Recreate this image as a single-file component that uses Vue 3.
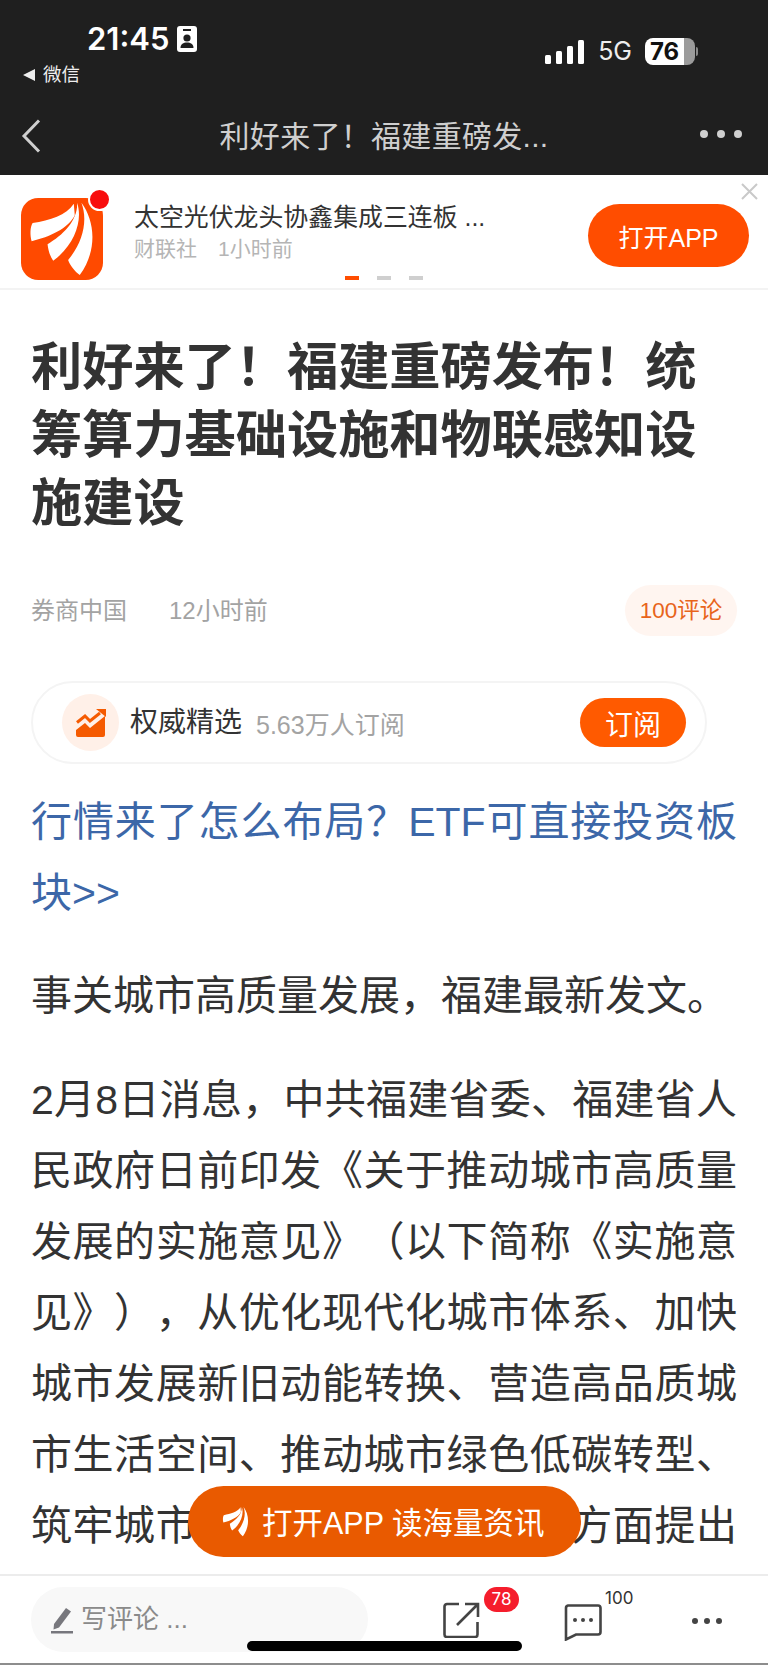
<script setup>
const feathers = [
  'M222 100C200 135 150 150 98 158C90 170 90 195 95 213C150 200 205 175 225 135Z',
  'M232 97C250 150 225 225 160 272C150 258 145 240 143 222C190 195 235 150 232 97Z',
  'M245 97C285 150 295 240 240 315C225 305 210 285 205 270C250 215 265 150 245 97Z'
]
const paragraphs = [
  '事关城市高质量发展，福建最新发文。',
  '2月8日消息，中共福建省委、福建省人民政府日前印发《关于推动城市高质量发展的实施意见》（以下简称《实施意见》），从优化现代化城市体系、加快城市发展新旧动能转换、营造高品质城市生活空间、推动城市绿色低碳转型、筑牢城市安全韧性防线等六个方面提出'
]
</script>

<template>
  <div class="page">
    <header class="head">
      <div class="status">
        <div class="status-left">
          <div class="time-row">
            <span class="time">21:45</span>
            <svg class="id-badge" viewBox="0 0 20 26" width="20" height="26">
              <rect width="20" height="26" rx="3" fill="#fff" />
              <rect x="6" y="3" width="8" height="2" fill="#1f1f1f" />
              <circle cx="10" cy="12" r="3.6" fill="#1f1f1f" />
              <path d="M3.5 22c0-4 3-5.5 6.500-5.500s6.500 1.500 6.500 5.500z" fill="#1f1f1f" />
            </svg>
          </div>
          <div class="wx-row"><i class="tri"></i><span>微信</span></div>
        </div>
        <div class="status-right">
          <svg width="40" height="24" viewBox="0 0 40 24" fill="#fff">
            <rect x="0" y="15" width="6" height="9" rx="1.500" />
            <rect x="11" y="11" width="6" height="13" rx="1.500" />
            <rect x="22" y="6" width="6" height="18" rx="1.500" />
            <rect x="33" y="0" width="6" height="24" rx="1.500" />
          </svg>
          <span class="net">5G</span>
          <div class="battery"><div class="batt-body"><span>76</span></div><i class="nib"></i></div>
        </div>
      </div>
      <nav class="nav">
        <svg class="back" width="20" height="34" viewBox="0 0 20 34" fill="none" stroke="#cfcfcf" stroke-width="3">
          <path d="M18 1.500L3 17l15 15.500" />
        </svg>
        <div class="nav-title">利好来了！福建重磅发...</div>
        <div class="nav-dots"><i></i><i></i><i></i></div>
      </nav>
    </header>

    <section class="banner">
      <div class="logo">
        <svg viewBox="63 83 247 247" width="82" height="82">
          <rect x="63" y="83" width="247" height="247" rx="52" fill="#ff4a00" />
          <path v-for="d in feathers" :key="d" :d="d" fill="#fff" />
        </svg>
        <i class="logo-dot"></i>
      </div>
      <div class="banner-text">
        <div class="banner-title">太空光伏龙头协鑫集成三连板 ...</div>
        <div class="banner-sub"><span>财联社</span><span>1小时前</span></div>
      </div>
      <button class="open-btn">打开APP</button>
      <svg class="close" width="17" height="17" viewBox="0 0 17 17" stroke="#c9c9c9" stroke-width="2">
        <path d="M1 1l15 15M16 1L1 16" />
      </svg>
      <div class="pager"><i class="on"></i><i></i><i></i></div>
    </section>

    <main class="content">
      <h1 class="title">利好来了！福建重磅发布！统筹算力基础设施和物联感知设施建设</h1>
      <div class="meta">
        <div class="meta-left"><span>券商中国</span><span>12小时前</span></div>
        <div class="comment-pill">100评论</div>
      </div>
      <div class="sub-card">
        <div class="avatar">
          <svg width="30" height="28" viewBox="0 0 30 28" fill="#f55a00">
            <path d="M0 21l9-7 5 5 15-12v19a2 2 0 0 1-2 2H2a2 2 0 0 1-2-2z" />
            <path d="M1 13.500l8-6.500 5 5L24 4" fill="none" stroke="#f55a00" stroke-width="3" />
            <path d="M20 0h10v8z" />
          </svg>
        </div>
        <span class="sub-name">权威精选</span>
        <span class="sub-count">5.63万人订阅</span>
        <button class="sub-btn">订阅</button>
      </div>
      <a class="promo">行情来了怎么布局？ETF可直接投资板块&gt;&gt;</a>
      <p v-for="p in paragraphs" :key="p" class="para">{{ p }}</p>
    </main>

    <div class="float-pill">
      <svg viewBox="85 90 215 230" width="29" height="31">
        <path v-for="d in feathers" :key="d" :d="d" fill="#fff" />
      </svg>
      <span>打开APP 读海量资讯</span>
    </div>

    <footer class="toolbar">
      <div class="input">
        <svg width="22" height="28" viewBox="0 0 22 28">
          <path d="M3 18L15 2l5 3.500L8 21.500 2.500 23.500z" fill="#77777d" />
          <rect x="0" y="25" width="22" height="2.500" fill="#77777d" />
        </svg>
        <span class="input-text">写评论 ...</span>
      </div>
      <div class="tool share">
        <svg width="37" height="36" viewBox="0 0 37 36" fill="none" stroke="#444" stroke-width="2.600">
          <path d="M16 2H4a2.500 2.500 0 0 0-2.500 2.500v28A2.500 2.500 0 0 0 4 35h28a2.500 2.500 0 0 0 2.500-2.500V20" />
          <path d="M14 23L34 3M22 2h13v13" />
        </svg>
        <span class="badge">78</span>
      </div>
      <div class="tool chat">
        <svg width="38" height="37" viewBox="0 0 38 37">
          <path d="M4 1.500h30A2.500 2.500 0 0 1 36.500 4v24a2.500 2.500 0 0 1-2.500 2.500H12L2 35.500V4A2.500 2.500 0 0 1 4 1.500z" fill="none" stroke="#444" stroke-width="2.600" />
          <circle cx="11" cy="16" r="2" fill="#444" /><circle cx="19" cy="16" r="2" fill="#444" /><circle cx="27" cy="16" r="2" fill="#444" />
        </svg>
        <span class="chat-count">100</span>
      </div>
      <div class="more"><i></i><i></i><i></i></div>
      <i class="home-bar"></i>
    </footer>
  </div>
</template>

<style>
html, body { margin: 0; background: #fff; }
</style>

<style scoped>
.page {
  position: relative;
  width: 768px;
  height: 1665px;
  overflow: hidden;
  display: flex;
  flex-direction: column;
  background: #fff;
  font-family: "Liberation Sans", "Noto Sans CJK SC", sans-serif;
  text-spacing-trim: space-all;
}
i { display: block; }
button { border: 0; padding: 0; font-family: inherit; color: #fff; }

.head { height: 175px; flex: none; background: #1f1f1f; display: flex; flex-direction: column; }
.status { height: 100px; display: flex; justify-content: space-between; }
.status-left { padding: 22px 0 0 23px; }
.time-row { display: flex; align-items: center; gap: 8px; padding-left: 64px; height: 34px; }
.time { font: 600 31px/34px "Inter", sans-serif; color: #fff; }
.id-badge { margin-top: -1px; }
.wx-row { display: flex; align-items: center; gap: 8px; margin-top: 6px; color: #eee; font-size: 18.500px; line-height: 26px; }
.tri { width: 0; height: 0; border: 6px solid transparent; border-left: 0; border-right: 12px solid #eee; }
.status-right { display: flex; align-items: center; height: 27px; margin: 38px 70px 0 0; }
.net { margin-left: 13px; font: 400 25px/27px "Inter", sans-serif; color: #eee; }
.battery { display: flex; align-items: center; margin-left: 13px; }
.batt-body { width: 50px; height: 27px; border-radius: 8px; overflow: hidden; background: linear-gradient(90deg, #fff 0 39px, #9b9b9b 39px); color: #111; }
.batt-body span { display: block; width: 39px; text-align: center; font: 700 24px/27px "Inter", sans-serif; }
.nib { width: 2px; height: 9px; margin-left: 1px; background: #8a8a8a; border-radius: 0 2px 2px 0; }

.nav { height: 75px; display: flex; align-items: center; padding: 0 26px 0 21px; }
.back { margin-top: -3px; }
.nav-title { flex: 1; text-align: center; color: #cfcfcf; font-size: 30px; line-height: 40px; letter-spacing: 0.3px; margin-top: -2px; padding-left: 27px; }
.nav-dots { display: flex; gap: 9px; margin-top: -8px; }
.nav-dots i { width: 8px; height: 8px; border-radius: 50%; background: #cfcfcf; }

.banner {
  position: relative;
  flex: none;
  height: 115px;
  box-sizing: border-box;
  border-bottom: 2px solid #f3f3f3;
  display: flex;
  align-items: center;
  padding: 0 19px 0 21px;
}
.logo { position: relative; width: 82px; height: 82px; flex: none; margin-top: 14px; }
.logo svg { display: block; }
.logo-dot { position: absolute; right: -8px; top: -10px; width: 19px; height: 19px; background: #f80d0d; border: 2px solid #fff; border-radius: 50%; }
.banner-text { flex: 1; margin-left: 31px; margin-top: 0; }
.banner-title { color: #333; font-size: 24.900px; line-height: 34px; white-space: nowrap; }
.banner-sub { color: #b5b5b5; font-size: 21px; line-height: 28px; margin-top: 1px; display: flex; gap: 21px; }
.open-btn { width: 161px; height: 63px; flex: none; margin-top: 8px; border-radius: 32px; background: #ff4d00; font-size: 25px; }
.close { position: absolute; right: 10px; top: 8px; }
.pager { position: absolute; left: 345px; top: 101px; display: flex; gap: 18px; }
.pager i { width: 14px; height: 4px; background: #cfcfcf; }
.pager i.on { background: #ff4d00; }

.content { flex: 1; min-height: 0; overflow: hidden; padding: 0 31px; }
.title { margin: 44px 0 0; font-size: 51.200px; line-height: 68px; font-weight: 700; color: #333; }
.meta { margin-top: 47px; height: 51px; display: flex; align-items: center; justify-content: space-between; }
.meta-left { display: flex; gap: 42px; color: #a3a3a3; font-size: 24px; line-height: 34px; }
.comment-pill { width: 112px; height: 51px; border-radius: 26px; background: #fff5f0; color: #e8641b; font-size: 22.500px; line-height: 51px; text-align: center; }
.sub-card {
  margin-top: 45px;
  width: 676px;
  height: 83px;
  box-sizing: border-box;
  border: 2px solid #f4f4f4;
  border-radius: 42px;
  display: flex;
  align-items: center;
  padding: 0 19px 0 29px;
}
.avatar { width: 57px; height: 57px; border-radius: 50%; background: #fff0e8; display: flex; align-items: center; justify-content: center; flex: none; }
.sub-name { margin-left: 11px; font-size: 28px; color: #333; line-height: 40px; }
.sub-count { margin-left: 14px; margin-top: 4px; font-size: 25px; color: #a3a3a3; line-height: 34px; flex: 1; }
.sub-btn { width: 106px; height: 49px; border-radius: 25px; background: #ff5a00; font-size: 28px; }
.promo { display: block; margin-top: 23px; color: #3c67a8; font-size: 41px; line-height: 71px; text-align: justify; }
.para { margin: 32px 0 33px; color: #333; font-size: 41px; line-height: 71px; text-align: justify; }
.para:last-of-type { text-align-last: justify; }

.float-pill {
  position: absolute;
  left: 188px;
  top: 1486px;
  width: 393px;
  height: 71px;
  box-sizing: border-box;
  border-radius: 36px;
  background: #e95a00;
  color: #fff;
  display: flex;
  align-items: center;
  padding-left: 34px;
  gap: 11px;
  font-size: 30.500px;
  white-space: nowrap;
}
.float-pill span { margin-top: -2px; }

.toolbar {
  position: relative;
  flex: none;
  height: 91px;
  box-sizing: border-box;
  background: #fff;
  border-top: 2px solid #ececec;
  border-bottom: 2px solid #8d8d8d;
  display: flex;
  align-items: flex-start;
}
.input {
  width: 337px;
  height: 65px;
  margin: 11px 0 0 31px;
  box-sizing: border-box;
  border-radius: 33px;
  background: #f8f8f8;
  display: flex;
  align-items: center;
  padding-left: 20px;
  gap: 8px;
  color: #8a8a8a;
  font-size: 26px;
}
.input-text { margin-top: -6px; }
.tool { position: relative; flex: none; }
.tool svg { display: block; }
.share { margin: 26px 0 0 75px; }
.badge {
  position: absolute;
  left: 41px;
  top: -15px;
  width: 35px;
  height: 25px;
  border-radius: 13px;
  background: #f51d2c;
  color: #fff;
  font: 400 17px/25px "Inter", sans-serif;
  text-align: center;
}
.chat { margin: 28px 0 0 84px; }
.chat-count { position: absolute; left: 41px; top: -17px; color: #333; font: 400 17px/22px "Inter", sans-serif; }
.more { display: flex; gap: 6px; margin: 42px 0 0 90px; }
.more i { width: 6px; height: 6px; border-radius: 50%; background: #444; }
.home-bar { position: absolute; left: 247px; top: 65px; width: 275px; height: 10px; background: #000; border-radius: 5px; }
</style>
